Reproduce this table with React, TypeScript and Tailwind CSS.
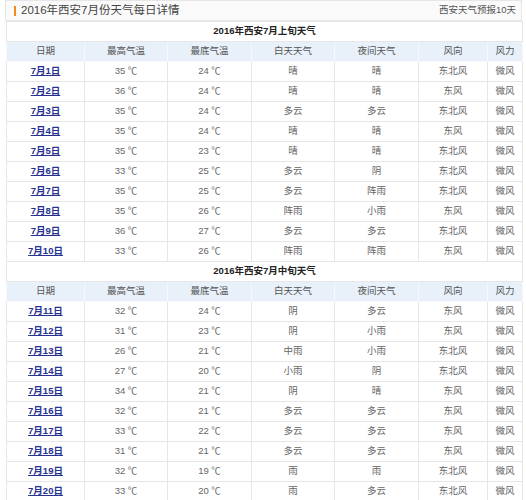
import React from "react";

type Row = [string, string, string, string, string, string, string];

const part1: Row[] = [
  ["7月1日", "35 ℃", "24 ℃", "晴", "晴", "东北风", "微风"],
  ["7月2日", "36 ℃", "24 ℃", "晴", "晴", "东风", "微风"],
  ["7月3日", "35 ℃", "24 ℃", "多云", "多云", "东北风", "微风"],
  ["7月4日", "35 ℃", "24 ℃", "晴", "晴", "东风", "微风"],
  ["7月5日", "35 ℃", "23 ℃", "晴", "晴", "东北风", "微风"],
  ["7月6日", "33 ℃", "25 ℃", "多云", "阴", "东北风", "微风"],
  ["7月7日", "35 ℃", "25 ℃", "多云", "阵雨", "东北风", "微风"],
  ["7月8日", "35 ℃", "26 ℃", "阵雨", "小雨", "东风", "微风"],
  ["7月9日", "36 ℃", "27 ℃", "多云", "多云", "东北风", "微风"],
  ["7月10日", "33 ℃", "26 ℃", "阵雨", "阵雨", "东风", "微风"],
];

const part2: Row[] = [
  ["7月11日", "32 ℃", "24 ℃", "阴", "多云", "东风", "微风"],
  ["7月12日", "31 ℃", "23 ℃", "阴", "小雨", "东风", "微风"],
  ["7月13日", "26 ℃", "21 ℃", "中雨", "小雨", "东北风", "微风"],
  ["7月14日", "27 ℃", "20 ℃", "小雨", "阴", "东北风", "微风"],
  ["7月15日", "34 ℃", "21 ℃", "阴", "晴", "东风", "微风"],
  ["7月16日", "32 ℃", "21 ℃", "多云", "多云", "东风", "微风"],
  ["7月17日", "33 ℃", "22 ℃", "多云", "多云", "东风", "微风"],
  ["7月18日", "31 ℃", "21 ℃", "多云", "多云", "东风", "微风"],
  ["7月19日", "32 ℃", "19 ℃", "雨", "雨", "东北风", "微风"],
  ["7月20日", "33 ℃", "20 ℃", "雨", "多云", "东北风", "微风"],
];

const headers = ["日期", "最高气温", "最底气温", "白天天气", "夜间天气", "风向", "风力"];
const widths = [78, 83, 84, 83, 84, 69, 35];

function Section({ title, rows }: { title: string; rows: Row[] }) {
  return (
    <>
      <tr className="h-[20px]">
        <td colSpan={7} className="text-center font-bold text-[9.5px] text-[#222] border border-[#e6e6e6] bg-white p-0">
          {title}
        </td>
      </tr>
      <tr className="h-[20px] bg-[#e8f0f9]">
        {headers.map((h) => (
          <td key={h} className="text-center text-[9.5px] text-[#555] border border-[#f6f8fc] p-0">
            {h}
          </td>
        ))}
      </tr>
      {rows.map((r) => (
        <tr key={r[0]} className="h-[20px] bg-white">
          {r.map((c, i) => (
            <td key={i} className="text-center text-[9.5px] text-[#666] border border-[#e6e6e6] p-0">
              {i === 0 ? (
                <a href="#" className="font-bold underline text-[#27318f]">
                  {c}
                </a>
              ) : (
                c
              )}
            </td>
          ))}
        </tr>
      ))}
    </>
  );
}

export default function App() {
  return (
    <div
      className="w-[526px] h-[500px] overflow-hidden bg-white pl-[6px] pr-[4px]"
      style={{ fontFamily: '"Liberation Sans", "Noto Sans CJK SC", sans-serif' }}
    >
      <div className="h-[21px] flex items-center justify-between border border-[#e6e6e6] bg-[#fafafa] -ml-[1px] pl-[8px] pr-[5px]">
        <div className="flex items-center gap-[5px]">
          <span className="w-[2px] h-[10px] bg-[#f08a1c]" />
          <span className="text-[11.5px] text-[#444]">2016年西安7月份天气每日详情</span>
        </div>
        <span className="text-[9.5px] text-[#555]">西安天气预报10天</span>
      </div>
      <table className="table-fixed border-collapse w-[516px]">
        <colgroup>
          {widths.map((w, i) => (
            <col key={i} style={{ width: w }} />
          ))}
        </colgroup>
        <tbody>
          <Section title="2016年西安7月上旬天气" rows={part1} />
          <Section title="2016年西安7月中旬天气" rows={part2} />
        </tbody>
      </table>
    </div>
  );
}
